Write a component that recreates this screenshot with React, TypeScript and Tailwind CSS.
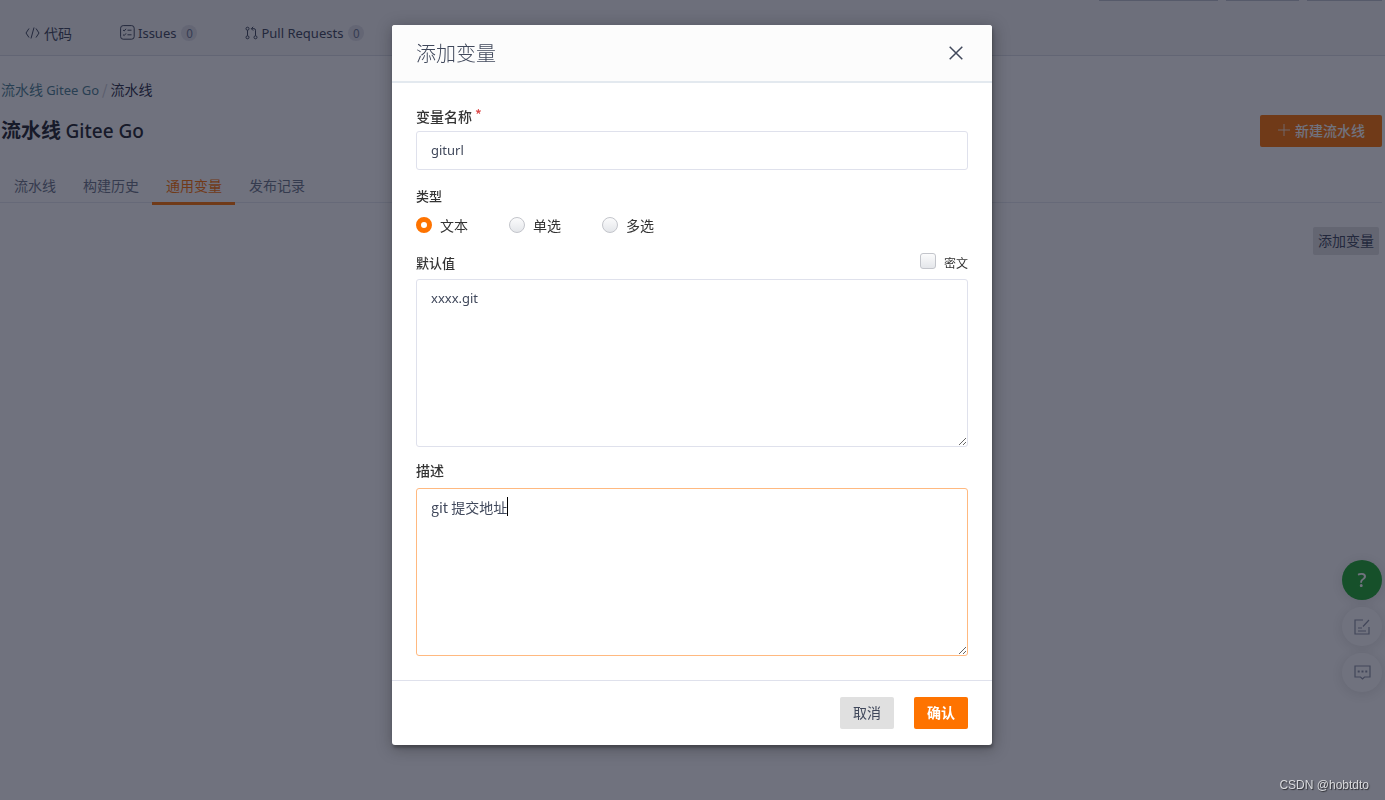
import type { ReactNode } from 'react'

const tabs = ['流水线', '构建历史', '通用变量', '发布记录']

const radioClass =
  'm-0 h-4 w-4 shrink-0 appearance-none rounded-full border border-[#c3c5cb] bg-linear-to-b from-[#fbfbfc] to-[#e4e6ea] checked:border-[5px] checked:border-[#fe7300] checked:bg-white checked:bg-none'

const areaClass =
  'block h-[168px] w-full resize-y rounded-[3px] border bg-white px-3.5 py-[9px] leading-[18px] text-[#40485b] outline-none'

const latinClass = "font-['Noto_Sans','Noto_Sans_CJK_SC',sans-serif] text-[13px]"

const floatClass =
  'flex w-10 items-center justify-center rounded-full shadow-[0_2px_14px_rgba(0,0,0,0.12)]'

function CodeIcon() {
  return (
    <svg width="15" height="12" viewBox="0 0 15 12" fill="none" stroke="currentColor">
      <path d="M4 1.5 1 6l3 4.5M11 1.5 14 6l-3 4.5M9 .5l-3 11" />
    </svg>
  )
}

function IssuesIcon() {
  return (
    <svg width="15" height="15" viewBox="0 0 15 15" fill="none" stroke="currentColor">
      <rect x=".6" y=".6" width="13.6" height="13.6" rx="2.6" />
      <path d="M7.5 5.2h4M7.5 9.8h4M3 5l1.2 1 1.8-2.2M3 9.6l1.2 1L6 8.4" />
    </svg>
  )
}

function PullIcon() {
  return (
    <svg width="13" height="14" viewBox="0 0 13 14" fill="none" stroke="currentColor">
      <circle cx="2.5" cy="2.7" r="1.5" />
      <circle cx="2.5" cy="11.3" r="1.5" />
      <circle cx="10.5" cy="11.3" r="1.5" />
      <path d="M2.5 4.2v5.6M10.5 9.8V4.2q0-1.5-1.5-1.5H6.5M8.2.8 6.3 2.7l1.9 1.9" />
    </svg>
  )
}

function NavItem({ icon, children, count }: { icon: ReactNode; children: ReactNode; count?: number }) {
  return (
    <a href="#" className="flex items-center gap-[3px] text-sm text-[#40485b]">
      {icon}
      {count === undefined ? (
        <span className="pl-px">{children}</span>
      ) : (
        <span className={`${latinClass} pt-0.5`}>{children}</span>
      )}
      {count !== undefined && (
        <span className="ml-0.5 flex h-4 w-4 items-center justify-center rounded-full bg-[#e0e0e6] text-xs text-[#707a93]">
          {count}
        </span>
      )}
    </a>
  )
}

function Page() {
  return (
    <div className="min-h-screen bg-white">
      <header className="relative border-b border-[#dcdfe6] bg-[#f7f7f8]">
        <div className="absolute top-0 right-[3px] flex gap-2">
          <span className="h-px w-[119px] bg-[#bfc2cc]" />
          <span className="h-px w-[73px] bg-[#bfc2cc]" />
          <span className="h-px w-[75px] bg-[#bfc2cc]" />
        </div>
        <nav className="flex h-[55px] items-center gap-12 pt-2.5 pl-[25px]">
          <NavItem icon={<CodeIcon />}>代码</NavItem>
          <NavItem icon={<IssuesIcon />} count={0}>Issues</NavItem>
          <NavItem icon={<PullIcon />} count={0}>Pull Requests</NavItem>
        </nav>
      </header>
      <main className="pr-[3px]">
        <div className="flex gap-[3px] pt-[23px] pl-px text-sm leading-5">
          <a href="#" className="text-[#4d7f91]">
            流水线 <span className={latinClass}>Gitee Go</span>
          </a>
          <span className="text-[#c5c8d0]">/</span>
          <span className="text-[#2c3048]">流水线</span>
        </div>
        <div className="mt-[15px] flex h-8 items-center justify-between pl-px">
          <h1 className="pb-0.5 text-xl font-bold text-[#22242c]">
            流水线 <span className="font-['Noto_Sans',sans-serif] text-[19px] font-medium">Gitee Go</span>
          </h1>
          <button className="flex h-8 items-center gap-[5px] rounded-xs bg-[#fe7300] pr-[17px] pb-0.5 pl-[18px] text-sm font-medium text-white">
            <svg width="12" height="12" viewBox="0 0 12 12" stroke="currentColor" opacity=".8">
              <path d="M6 0v12M0 6h12" />
            </svg>
            新建流水线
          </button>
        </div>
        <nav className="mt-5 flex h-9 border-b border-[#e6e9ef]">
          {tabs.map((tab) => (
            <a
              key={tab}
              href="#"
              className={
                tab === '通用变量'
                  ? 'h-[38px] border-b-3 border-[#fe7300] pt-2 pr-[13px] pl-3.5 text-sm text-[#fe7300]'
                  : 'h-[38px] pt-2 pr-[13px] pl-3.5 text-sm text-[#6d7588]'
              }
            >
              {tab}
            </a>
          ))}
        </nav>
        <div className="mt-6 flex justify-end pr-[3px]">
          <button className="h-7 rounded-xs bg-[#e0e0e2] px-[5px] pb-0.5 text-sm text-[#40485b]">添加变量</button>
        </div>
      </main>
      <aside className="fixed right-[3px] bottom-[108px] flex flex-col items-center gap-[7px]">
        <button aria-label="帮助" className={`${floatClass} h-10 bg-[#1eaa2e] font-['Noto_Sans',sans-serif] text-xl font-medium text-white`}>
          ?
        </button>
        <button aria-label="反馈" className={`${floatClass} h-[39px] bg-white text-[#8c92a4]`}>
          <svg width="16" height="16" viewBox="0 0 16 16" fill="none" stroke="currentColor" strokeWidth="1.2">
            <path d="M9 1H1v14h14V8M15 1 9 7.5M4 9h4M4 12h8" />
          </svg>
        </button>
        <button aria-label="留言" className={`${floatClass} h-[39px] bg-white text-[#8c92a4]`}>
          <svg width="17" height="15" viewBox="0 0 17 15" fill="none" stroke="currentColor" strokeWidth="1.2">
            <path d="M1 1h15v11h-5.5l-2 2-2-2H1z" />
            <path d="M3.7 6.5h2M7.5 6.5h2M11.3 6.5h2" strokeWidth="2" />
          </svg>
        </button>
      </aside>
    </div>
  )
}

function VariableDialog() {
  return (
    <div
      role="dialog"
      aria-labelledby="dialog-title"
      className="w-[600px] rounded-[3px] bg-white text-[#333] shadow-[1px_3px_3px_0_rgba(0,0,0,0.25),1px_3px_15px_2px_rgba(0,0,0,0.25)]"
    >
      <div className="flex h-[58px] items-center justify-between rounded-t-[3px] border-b-2 border-[#e3e9ef] bg-[#fcfcfc] pr-[29px] pl-6">
        <h2 id="dialog-title" className="text-xl font-light text-[#40485b]">添加变量</h2>
        <button aria-label="关闭" className="text-[#40485b]">
          <svg width="14" height="14" viewBox="0 0 14 14" stroke="currentColor" strokeWidth="1.5">
            <path d="m.7.7 12.6 12.6M13.3.7.7 13.3" />
          </svg>
        </button>
      </div>
      <form className="px-6 pt-[23px] pb-6">
        <label htmlFor="name" className="mb-[5px] flex h-5 gap-[3px] text-sm leading-5 font-medium">
          变量名称<span className="text-sm leading-4 text-[#db4848]">*</span>
        </label>
        <input
          id="name"
          defaultValue="giturl"
          className={`${latinClass} block h-[39px] w-full rounded-[3px] border border-[#dfe1ec] px-3.5 pb-0.5 text-[#40485b] outline-none`}
        />
        <fieldset className="mt-4">
          <legend className="mb-[9px] h-5 text-[13px] leading-5 font-medium">类型</legend>
          <div className="flex h-5 gap-[41px] text-sm">
            {['文本', '单选', '多选'].map((kind, i) => (
              <label key={kind} className="flex items-center gap-2">
                <input type="radio" name="kind" defaultChecked={i === 0} className={radioClass} />
                {kind}
              </label>
            ))}
          </div>
        </fieldset>
        <div className="mt-[18px] mb-1.5 flex h-5 items-center justify-between">
          <label htmlFor="value" className="text-[13px] font-medium">默认值</label>
          <label className="flex items-center gap-2 text-xs">
            <input
              type="checkbox"
              className="mb-1 h-4 w-4 appearance-none rounded-[3px] border border-[#c3c5cb] bg-linear-to-b from-[#fbfbfc] to-[#e4e6ea]"
            />
            密文
          </label>
        </div>
        <textarea id="value" defaultValue="xxxx.git" className={`${areaClass} ${latinClass} border-[#dfe1ec]`} />
        <label htmlFor="desc" className="mt-[13px] mb-2 block h-5 text-sm leading-5 font-medium">描述</label>
        <div className="relative">
          <textarea id="desc" defaultValue="git 提交地址" className={`${areaClass} border-[#ffb980] text-sm caret-transparent`} />
          <span className="absolute top-[9px] left-[91px] h-[19px] w-px bg-black" />
        </div>
      </form>
      <div className="flex justify-end gap-5 border-t border-[#dfe1ec] px-6 py-4">
        <button className="h-8 rounded-xs bg-[#e0e0e0] px-[13px] pb-0.5 text-sm text-[#40485b]">取消</button>
        <button className="h-8 rounded-xs bg-[#fe7300] px-[13px] pb-0.5 text-sm font-bold text-white">确认</button>
      </div>
    </div>
  )
}

export default function App() {
  return (
    <div className="font-['Noto_Sans_CJK_SC','Noto_Sans',sans-serif]">
      <Page />
      <div className="fixed inset-0 flex items-start justify-center overflow-hidden bg-[rgba(17,20,40,0.6)] pt-[25px] pr-px">
        <VariableDialog />
      </div>
      <p className="fixed right-4 bottom-[7px] font-['Liberation_Sans',sans-serif] text-xs leading-4 text-[#d8d9dc] text-shadow-[1px_1px_1px_rgb(0_0_0/0.6)]">
        CSDN @hobtdto
      </p>
    </div>
  )
}
